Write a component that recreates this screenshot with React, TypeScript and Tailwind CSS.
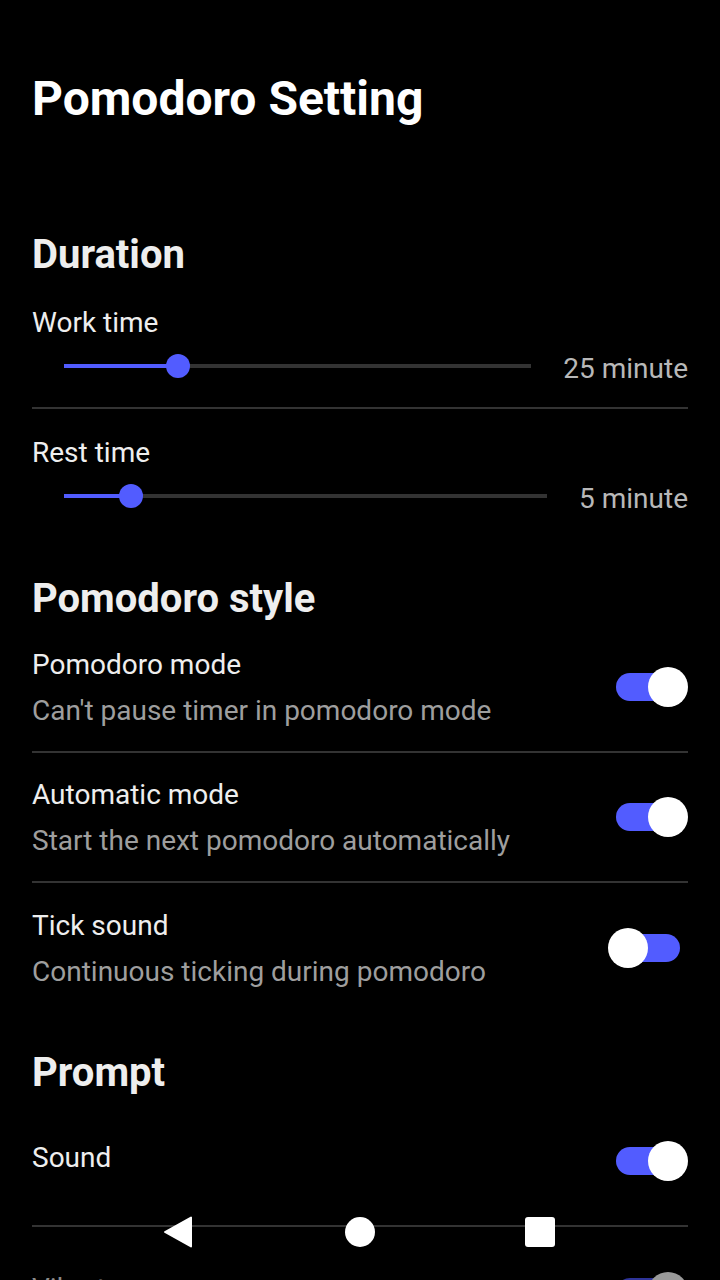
import React from "react";

function Slider({ pct }: { pct: number }) {
  return (
    <div className="flex-1 px-[32px] h-[56px] flex items-center">
      <div className="relative w-full h-[4px] bg-[#333333]">
        <div className="absolute left-0 top-0 h-[4px] bg-[#525cff]" style={{ width: `${pct}%` }} />
        <div
          className="absolute top-1/2 w-[24px] h-[24px] rounded-full bg-[#525cff] -translate-x-1/2 -translate-y-1/2"
          style={{ left: `${pct}%` }}
        />
      </div>
    </div>
  );
}

function Toggle({ on, dim }: { on: boolean; dim?: boolean }) {
  return (
    <div className="relative w-[80px] h-[40px] shrink-0">
      <div
        className={`absolute left-[8px] top-[6px] w-[64px] h-[28px] rounded-full ${dim ? "bg-[#2e3499]" : "bg-[#525cff]"}`}
      />
      <div
        className={`absolute top-0 w-[40px] h-[40px] rounded-full ${dim ? "bg-[#9a9a9a]" : "bg-white"} ${on ? "left-[40px]" : "left-0"}`}
      />
    </div>
  );
}

function Header({ title }: { title: string }) {
  return (
    <div className="h-[84px] pt-[36px]">
      <div className="text-[40px] leading-[48px] font-bold text-[#eeeeee]">{title}</div>
    </div>
  );
}

function SliderRow({ label, value, pct, divider }: { label: string; value: string; pct: number; divider?: boolean }) {
  return (
    <div className={`h-[130px] pt-[28px] ${divider ? "border-b-2 border-[#333333]" : ""}`}>
      <div className="text-[28px] leading-[32px] text-[#eeeeee]">{label}</div>
      <div className="flex items-center -mt-[1px]">
        <Slider pct={pct} />
        <div className="pt-[5px] text-[28px] leading-[36px] text-[#b8b8b8]">{value}</div>
      </div>
    </div>
  );
}

function ToggleRow({
  title,
  subtitle,
  on,
  divider,
  dim,
}: {
  title: string;
  subtitle?: string;
  on: boolean;
  divider?: boolean;
  dim?: boolean;
}) {
  return (
    <div className={`h-[130px] flex items-center justify-between ${divider ? "border-b-2 border-[#333333]" : ""}`}>
      <div className={`flex flex-col gap-[10px] ${subtitle ? "mt-[2px]" : "mb-[6px]"}`}>
        <div className={`text-[28px] leading-[36px] ${dim ? "text-[#8a8a8a]" : "text-[#eeeeee]"}`}>{title}</div>
        {subtitle && <div className="text-[28px] leading-[36px] text-[#9e9e9e]">{subtitle}</div>}
      </div>
      <Toggle on={on} dim={dim} />
    </div>
  );
}

export default function App() {
  return (
    <div
      className="relative w-[720px] h-[1280px] overflow-hidden bg-black"
      style={{ fontFamily: "Roboto, 'Noto Sans', sans-serif" }}
    >
      <div className="px-[32px]">
        <div className="pt-[71px] h-[195px]">
          <div className="text-[48px] leading-[56px] font-bold text-white">Pomodoro Setting</div>
        </div>
        <Header title="Duration" />
        <SliderRow label="Work time" value="25 minute" pct={24.4} divider />
        <SliderRow label="Rest time" value="5 minute" pct={13.9} />
        <Header title="Pomodoro style" />
        <ToggleRow title="Pomodoro mode" subtitle="Can't pause timer in pomodoro mode" on divider />
        <ToggleRow title="Automatic mode" subtitle="Start the next pomodoro automatically" on divider />
        <ToggleRow title="Tick sound" subtitle="Continuous ticking during pomodoro" on={false} />
        <Header title="Prompt" />
        <ToggleRow title="Sound" on divider />
        <ToggleRow title="Vibrate" on dim />
      </div>

      {/* system navigation bar overlay */}
      <div className="absolute left-0 right-0 bottom-0 h-[96px] pointer-events-none">
        <svg className="absolute left-[162px] top-[31px]" width="32" height="34" viewBox="0 0 32 34">
          <path d="M3 17 L29 2.5 L29 31.5 Z" fill="white" stroke="white" strokeWidth="2" strokeLinejoin="round" />
        </svg>
        <div className="absolute left-[345px] top-[33px] w-[30px] h-[30px] rounded-full bg-white" />
        <div className="absolute left-[525px] top-[33px] w-[30px] h-[30px] rounded-[3px] bg-white" />
      </div>
    </div>
  );
}
